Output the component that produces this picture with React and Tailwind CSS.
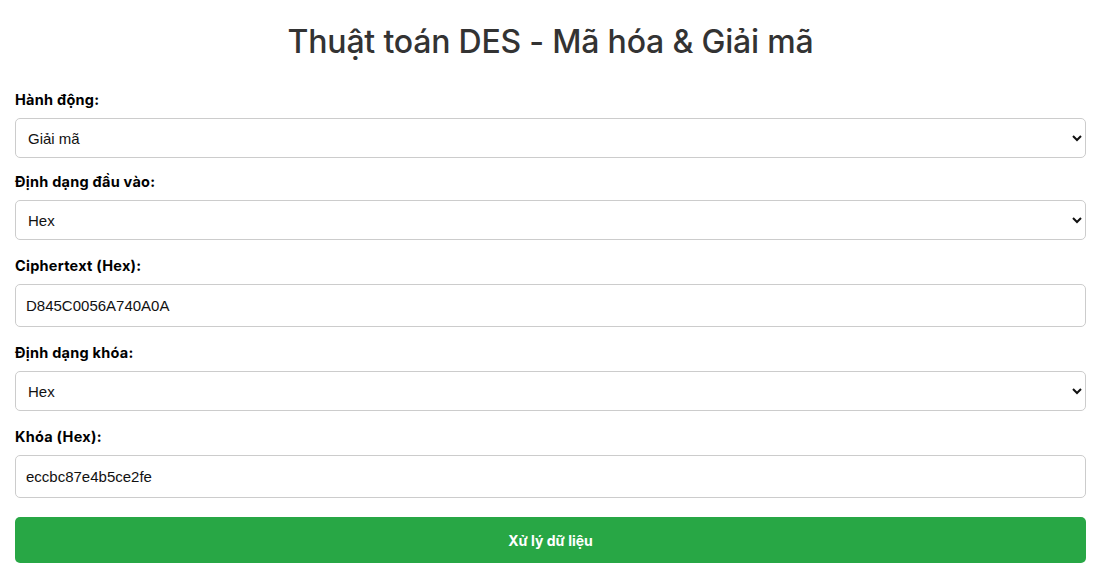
import React, { useState } from 'react';

const FIELD = "block w-full rounded-[5px] border border-[#cccccc] bg-white text-[15px] text-[#111] font-['Liberation_Sans',Arial,sans-serif] outline-none";

function Label({ children }) {
  return (
    <label className="block text-[14.5px] leading-[21px] font-bold text-black mb-[8px] tracking-[0.25px]">{children}</label>
  );
}

export default function App() {
  const [action, setAction] = useState('decrypt');
  const [inFmt, setInFmt] = useState('hex');
  const [cipher, setCipher] = useState('D845C0056A740A0A');
  const [keyFmt, setKeyFmt] = useState('hex');
  const [key, setKey] = useState('eccbc87e4b5ce2fe');

  return (
    <div className="min-h-screen bg-white pl-[15px] pr-[27px] pt-[23px] font-['Inter','Noto_Sans',sans-serif]">
      <h1 className="text-center text-[32px] leading-[38px] font-medium text-[#333] mb-[28px] tracking-[-0.2px]">
        Thuật toán DES - Mã hóa &amp; Giải mã
      </h1>

      <Label>Hành động:</Label>
      <select value={action} onChange={e => setAction(e.target.value)} className={`${FIELD} h-[40px] pl-[8px] mb-[13px]`}>
        <option value="encrypt">Mã hóa</option>
        <option value="decrypt">Giải mã</option>
      </select>

      <Label>Định dạng đầu vào:</Label>
      <select value={inFmt} onChange={e => setInFmt(e.target.value)} className={`${FIELD} h-[40px] pl-[8px] mb-[15px]`}>
        <option value="hex">Hex</option>
        <option value="text">Text</option>
      </select>

      <Label>Ciphertext (Hex):</Label>
      <input value={cipher} onChange={e => setCipher(e.target.value)} className={`${FIELD} h-[43px] px-[10px] mb-[15px]`} />

      <Label>Định dạng khóa:</Label>
      <select value={keyFmt} onChange={e => setKeyFmt(e.target.value)} className={`${FIELD} h-[40px] pl-[8px] mb-[15px]`}>
        <option value="hex">Hex</option>
        <option value="text">Text</option>
      </select>

      <Label>Khóa (Hex):</Label>
      <input value={key} onChange={e => setKey(e.target.value)} className={`${FIELD} h-[43px] px-[10px]`} />

      <button className="mt-[19px] w-full h-[46px] rounded-[5px] bg-[#28a745] text-white text-[14px] font-bold">
        Xử lý dữ liệu
      </button>
    </div>
  );
}
